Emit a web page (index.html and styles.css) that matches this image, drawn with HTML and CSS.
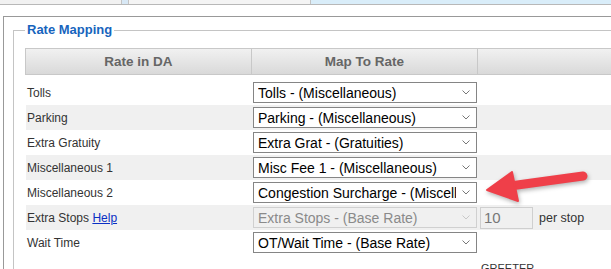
FILE: index.html
```html
<!DOCTYPE html>
<html lang="en">
<head>
    <meta charset="UTF-8">
    <title>Rate Mapping</title>
    <link rel="stylesheet" href="styles.css">
</head>
<body>

    <div class="topbar">
        <div class="tab tab-left"></div>
        <div class="tab tab-handle"></div>
        <div class="tab tab-mid"></div>
        <div class="tab tab-active"></div>
    </div>

    <div class="panel">
        <fieldset class="group">
            <legend>Rate Mapping</legend>
            <div class="map">
                <div class="map-head">
                    <div class="hcell">Rate in DA</div>
                    <div class="hcell">Map To Rate</div>
                    <div class="hcell"></div>
                </div>

                <div class="map-row">
                    <div class="name">Tolls</div>
                    <div class="pick"><div class="sel"><span>Tolls - (Miscellaneous)</span><svg class="chev" width="8" height="5" viewBox="0 0 8 5"><path d="M0.5 0.5 L4 4 L7.5 0.5"/></svg></div></div>
                    <div class="extra"></div>
                </div>
                <div class="map-row alt">
                    <div class="name">Parking</div>
                    <div class="pick"><div class="sel"><span>Parking - (Miscellaneous)</span><svg class="chev" width="8" height="5" viewBox="0 0 8 5"><path d="M0.5 0.5 L4 4 L7.5 0.5"/></svg></div></div>
                    <div class="extra"></div>
                </div>
                <div class="map-row">
                    <div class="name">Extra Gratuity</div>
                    <div class="pick"><div class="sel"><span>Extra Grat - (Gratuities)</span><svg class="chev" width="8" height="5" viewBox="0 0 8 5"><path d="M0.5 0.5 L4 4 L7.5 0.5"/></svg></div></div>
                    <div class="extra"></div>
                </div>
                <div class="map-row alt">
                    <div class="name">Miscellaneous 1</div>
                    <div class="pick"><div class="sel"><span>Misc Fee 1 - (Miscellaneous)</span><svg class="chev" width="8" height="5" viewBox="0 0 8 5"><path d="M0.5 0.5 L4 4 L7.5 0.5"/></svg></div></div>
                    <div class="extra"></div>
                </div>
                <div class="map-row">
                    <div class="name">Miscellaneous 2</div>
                    <div class="pick"><div class="sel"><span>Congestion Surcharge - (Miscellaneous)</span><svg class="chev" width="8" height="5" viewBox="0 0 8 5"><path d="M0.5 0.5 L4 4 L7.5 0.5"/></svg></div></div>
                    <div class="extra"></div>
                </div>
                <div class="map-row alt">
                    <div class="name">Extra Stops <a href="#">Help</a></div>
                    <div class="pick"><div class="sel disabled"><span>Extra Stops - (Base Rate)</span><svg class="chev" width="8" height="5" viewBox="0 0 8 5"><path d="M0.5 0.5 L4 4 L7.5 0.5"/></svg></div></div>
                    <div class="extra"><div class="qty">10</div><span class="unit">per stop</span></div>
                </div>
                <div class="map-row">
                    <div class="name">Wait Time</div>
                    <div class="pick"><div class="sel"><span>OT/Wait Time - (Base Rate)</span><svg class="chev" width="8" height="5" viewBox="0 0 8 5"><path d="M0.5 0.5 L4 4 L7.5 0.5"/></svg></div></div>
                    <div class="extra"></div>
                </div>
                <div class="map-foot">
                    <div></div>
                    <div></div>
                    <div class="next-label">GREETER</div>
                </div>
            </div>
        </fieldset>
    </div>

    <!-- flecha roja de anotación -->
    <svg class="callout" width="115" height="50" viewBox="0 0 115 50">
        <line x1="30" y1="26" x2="103" y2="16" stroke="#ef3f49" stroke-width="9" stroke-linecap="round"/>
        <polygon points="7,30 32,12 38,41" fill="#ef3f49" stroke="#ef3f49" stroke-width="2" stroke-linejoin="round"/>
    </svg>

</body>
</html>
```

FILE: styles.css
```css
body {
    font-family: 'Liberation Sans', Arial, sans-serif;
    background-color: #fff;
    margin: 0;
    padding: 0;
    overflow: hidden;
    position: relative;
    width: 611px;
    height: 269px;
}

/* barra de pestañas de arriba */
.topbar {
    display: flex;
    height: 4px;
    border-bottom: 1px solid #b8b8b8;
}
.tab {
    height: 4px;
}
.tab-left {
    width: 121px;
    background-color: #f1f1f1;
}
.tab-handle {
    width: 6px;
    background-color: #d8e8f5;
    border-left: 1px solid #c4c4c4;
    border-right: 1px solid #c4c4c4;
}
.tab-mid {
    width: 181px;
    background-color: #f4f4f4;
    border-right: 1px solid #c4c4c4;
}
.tab-active {
    flex: 1;
    background-color: #d9edf9;
}

.panel {
    margin: 11px 0 0 3px;
    border-top: 1px solid #999;
    border-left: 1px solid #999;
    padding: 5px 0 0 9px;
    width: 720px;
}

.group {
    margin: 0;
    border: 1px solid #c4c4c4;
    padding: 10px 0 20px 11px;
}
.group legend {
    padding: 0 2px;
    font-size: 13px;
    line-height: 16px;
    font-weight: bold;
    color: #1764bd;
}

.map {
    width: 680px;
}
.map-head,
.map-row,
.map-foot {
    display: grid;
    grid-template-columns: 226px 226px 1fr;
}
.map-head {
    height: 25px;
    border: 1px solid #c8c8c8;
    background: linear-gradient(#f1f1f1, #d9d9d9);
    margin-bottom: 5px;
}
.hcell {
    display: flex;
    align-items: center;
    justify-content: center;
    font-size: 13.5px;
    font-weight: bold;
    color: #666;
    border-right: 1px solid #c8c8c8;
}
.map-row {
    height: 25px;
    align-items: center;
}
.map-row.alt {
    background-color: #f0f0f0;
    margin-left: 1px;
}
.map-row.alt .name {
    padding-left: 1px;
}
.name {
    padding-left: 2px;
    font-size: 12px;
    color: #333;
}
.name a {
    color: #0b2fc4;
    text-decoration: underline;
}
.pick {
    padding-left: 2px;
}
.map-row.alt .pick {
    padding-left: 1px;
}
.sel {
    display: flex;
    align-items: center;
    justify-content: space-between;
    width: 224px;
    height: 21px;
    box-sizing: border-box;
    border: 1px solid #858585;
    background-color: #fff;
    padding: 0 6px 0 4px;
    font-size: 14px;
    color: #000;
    overflow: hidden;
}
.sel span {
    white-space: nowrap;
    overflow: hidden;
    flex: 1;
}
.chev {
    flex: none;
    margin-left: 6px;
}
.chev path {
    fill: none;
    stroke: #777;
    stroke-width: 1;
}
.sel.disabled {
    border-color: #d0d0d0;
    background-color: transparent;
    color: #8a8a8a;
}
.sel.disabled .chev path {
    stroke: #c8c8c8;
}

.extra {
    display: flex;
    align-items: center;
    padding-left: 2px;
}
.qty {
    width: 53px;
    height: 22px;
    box-sizing: border-box;
    border: 1px solid #cfcfcf;
    background-color: #f0f0f0;
    padding-left: 3px;
    font-size: 15px;
    line-height: 20px;
    color: #777;
}
.unit {
    margin-left: 6px;
    font-size: 12.5px;
    color: #333;
}

.map-foot {
    padding-top: 7px;
}
.next-label {
    padding-left: 4px;
    font-size: 11px;
    color: #333;
}

/* flecha sobre la tabla */
.callout {
    position: absolute;
    left: 480px;
    top: 160px;
    filter: drop-shadow(1px 2px 2px rgba(0, 0, 0, 0.3));
}
```
